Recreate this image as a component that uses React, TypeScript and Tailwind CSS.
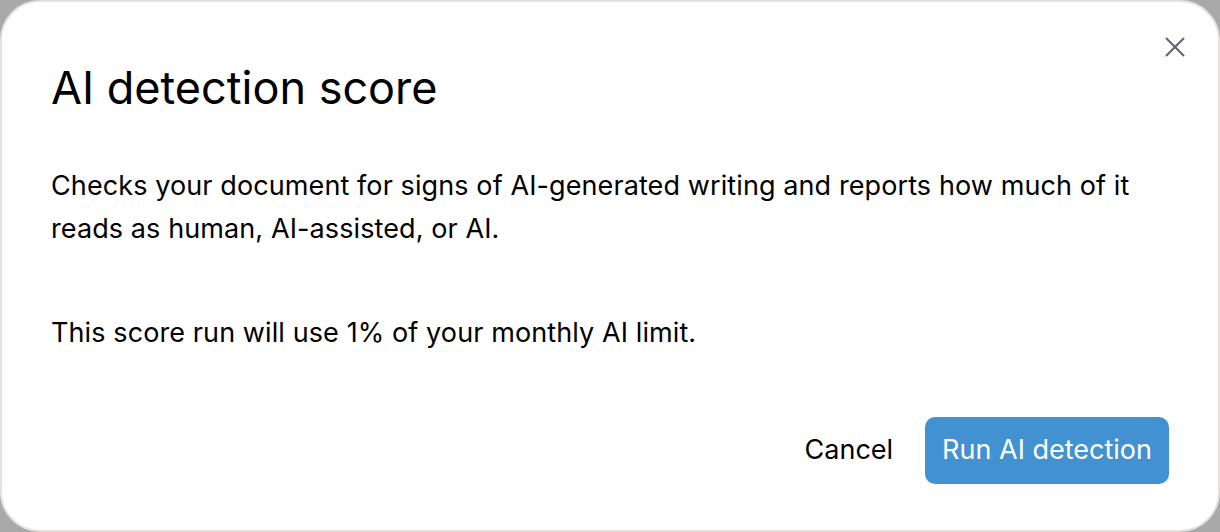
import React from 'react';
import { X } from 'lucide-react';

export default function App() {
  return (
    <div className="w-[1220px] h-[532px] bg-[#a9a9a9] font-['Inter',sans-serif] text-black">
      <div className="relative flex h-full flex-col rounded-[40px] border-2 border-[#e4e1df] bg-white px-[49px]">
        {/* Close */}
        <button className="absolute right-[26px] top-[28px] text-[#5b6670]">
          <X size={34} strokeWidth={1.4} />
        </button>

        <h2 className="mt-[58px] text-[45px] leading-[56px] font-normal">AI detection score</h2>

        <p className="mt-[48px] text-[27px] leading-[43px] tracking-[0.1px]">
          Checks your document for signs of AI-generated writing and reports how much of it reads as human,
          AI-assisted, or AI.
        </p>

        <p className="mt-[61px] text-[27px] leading-[43px] tracking-[0.1px]">
          This score run will use 1% of your monthly AI limit.
        </p>

        {/* Footer */}
        <div className="mt-[63px] flex items-center justify-end gap-8">
          <button className="text-[27px]">Cancel</button>
          <button className="h-[67px] rounded-[10px] bg-[#4291d1] px-[17px] text-[27px] text-white">
            Run AI detection
          </button>
        </div>
      </div>
    </div>
  );
}
